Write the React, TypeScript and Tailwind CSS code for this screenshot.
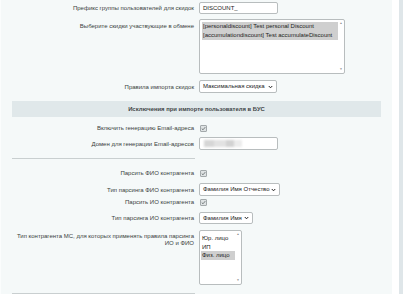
import React from "react";

const font = { fontFamily: '"Liberation Sans", Arial, sans-serif' };

function Check() {
  return (
    <span className="flex h-[7px] w-[7px] items-center justify-center rounded-[1px] border border-[#a3a9ab] bg-[#dfe3e4]">
      <svg width="5" height="5" viewBox="0 0 10 10">
        <path d="M1.5 5.2 L4 7.6 L8.6 2.2" fill="none" stroke="#6b7375" strokeWidth="1.8" />
      </svg>
    </span>
  );
}

function Chevron() {
  return (
    <svg width="5" height="4" viewBox="0 0 10 8" className="ml-auto shrink-0">
      <path d="M1.5 2 L5 5.6 L8.5 2" fill="none" stroke="#222" strokeWidth="2" />
    </svg>
  );
}

function Scroll() {
  return (
    <div className="flex w-[6px] flex-col items-center justify-between py-[2px] text-[3px] leading-none text-[#888]">
      <span>▲</span>
      <span>▼</span>
    </div>
  );
}

function Label({ children, top }: { children: React.ReactNode; top?: boolean }) {
  return (
    <div
      className={`w-[194px] whitespace-nowrap pr-[1px] text-right leading-[8px] ${
        top ? "self-start pt-[3px]" : ""
      }`}
    >
      {children}
    </div>
  );
}

export default function App() {
  return (
    <div className="flex h-[294px] w-[403px] overflow-hidden bg-white text-[6px] text-[#3a3f40]" style={font}>
      <div className="flex w-[392px] flex-col border-l border-[#fbfdfd] bg-[#f5f9f9]">
        {/* Префикс */}
        <div className="mt-[2px] flex h-[12px] items-center">
          <Label>Префикс группы пользователей для скидок</Label>
          <div className="ml-[4px] flex h-[12px] w-[79px] items-center whitespace-nowrap rounded-[2px] border border-[#b8bdbe] bg-white pl-[3px] text-[#222]">
            DISCOUNT_
          </div>
        </div>

        {/* Скидки */}
        <div className="mt-[5px] flex h-[55px]">
          <Label top>Выберите скидки участвующие в обмене</Label>
          <div className="ml-[4px] flex h-[55px] w-[146px] rounded-[2px] border border-[#b8bdbe] bg-white">
            <div className="flex flex-1 flex-col whitespace-nowrap pl-[2px] pt-[2px] leading-[9px] text-[#222]">
              <div className="bg-[#cfcfcf] pl-[1px]">[personaldiscount] Test personal Discount</div>
              <div className="bg-[#cfcfcf] pl-[1px]">[accumulationdiscount] Test accumulateDiscount</div>
            </div>
            <Scroll />
          </div>
        </div>

        {/* Правила */}
        <div className="mt-[6px] flex h-[13px] items-center">
          <Label>Правила импорта скидок</Label>
          <div className="ml-[4px] flex h-[13px] w-[78px] items-center whitespace-nowrap rounded-[2px] border border-[#b8bdbe] bg-white px-[3px] text-[#222]">
            Максимальная скидка
            <Chevron />
          </div>
        </div>

        {/* Заголовок */}
        <div className="mx-[11px] mt-[8px] flex h-[16px] items-center justify-center bg-[#e0e8ea] text-[5.9px] font-bold text-[#3f4648]">
          Исключения при импорте пользователя в БУС
        </div>

        <div className="mt-[6px] flex h-[10px] items-center">
          <Label>Включить генерацию Email-адреса</Label>
          <div className="ml-[5px]">
            <Check />
          </div>
        </div>

        <div className="mt-[4px] flex h-[13px] items-center">
          <Label>Домен для генерации Email-адресов</Label>
          <div className="ml-[4px] flex h-[13px] w-[79px] items-center rounded-[2px] border border-[#b8bdbe] bg-white pl-[4px]">
            <div className="flex h-[7px] blur-[1px]">
              <div className="w-[10px] bg-[#d6d6d6]" />
              <div className="w-[12px] bg-[#e2e2e2]" />
              <div className="w-[8px] bg-[#d2d2d2]" />
              <div className="w-[8px] bg-[#ececec]" />
            </div>
          </div>
        </div>

        <div className="ml-[11px] mt-[8px] h-px w-[183px] bg-[#c9cfd0]" />

        <div className="mt-[9px] flex h-[10px] items-center">
          <Label>Парсить ФИО контрагента</Label>
          <div className="ml-[5px]">
            <Check />
          </div>
        </div>

        <div className="mt-[5px] flex h-[13px] items-center">
          <Label>Тип парсинга ФИО контрагента</Label>
          <div className="ml-[4px] flex h-[13px] w-[81px] items-center whitespace-nowrap rounded-[2px] border border-[#b8bdbe] bg-white px-[3px] text-[#222]">
            Фамилия Имя Отчество
            <Chevron />
          </div>
        </div>

        <div className="mt-[1px] flex h-[10px] items-center">
          <Label>Парсить ИО контрагента</Label>
          <div className="ml-[5px]">
            <Check />
          </div>
        </div>

        <div className="mt-[5px] flex h-[12px] items-center">
          <Label>Тип парсинга ИО контрагента</Label>
          <div className="ml-[4px] flex h-[12px] w-[54px] items-center whitespace-nowrap rounded-[2px] border border-[#b8bdbe] bg-white px-[3px] text-[#222]">
            Фамилия Имя
            <Chevron />
          </div>
        </div>

        <div className="mt-[6px] flex h-[55px]">
          <Label top>
            <div className="leading-[7px]">
              Тип контрагента МС, для которых применять правила парсинга
              <br />
              ИО и ФИО
            </div>
          </Label>
          <div className="ml-[4px] flex h-[55px] w-[43px] rounded-[2px] border border-[#b8bdbe] bg-white">
            <div className="flex flex-1 flex-col whitespace-nowrap pl-[1px] pt-[3px] leading-[8.5px] text-[#222]">
              <div className="pl-[1px]">Юр. лицо</div>
              <div className="pl-[1px]">ИП</div>
              <div className="bg-[#cfcfcf] pl-[1px]">Физ. лицо</div>
            </div>
            <Scroll />
          </div>
        </div>

        <div className="ml-[11px] mt-[8px] h-px w-[183px] bg-[#c9cfd0]" />
      </div>
      <div className="w-[7px] bg-white" />
      <div className="w-[4px] bg-[#dfe6e9]" />
    </div>
  );
}
